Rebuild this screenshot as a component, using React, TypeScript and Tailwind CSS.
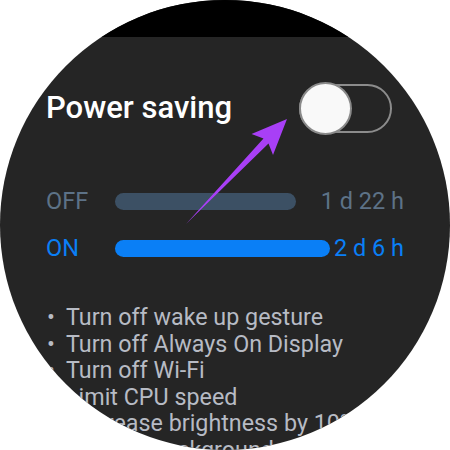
import React from "react";

const stats = [
  { label: "OFF", bar: "w-[181px] bg-[#3c5064]", value: "1 d 22 h", color: "text-[#5d7287]" },
  { label: "ON", bar: "w-[215px] bg-[#0a7ff6]", value: "2 d 6 h", color: "text-[#0a7ff6]" },
];

const tips = [
  "Turn off wake up gesture",
  "Turn off Always On Display",
  "Turn off Wi-Fi",
  "Limit CPU speed",
  "Decrease brightness by 10%",
  "Restrict background network usage",
];

export default function App() {
  return (
    <div className="w-[450px] h-[450px] bg-white font-['Roboto',sans-serif]">
      <div className="relative w-[450px] h-[450px] rounded-full overflow-hidden bg-[#252525]">
        {/* status strip */}
        <div className="h-[37px] bg-black" />

        {/* header */}
        <div className="mt-[47px] flex items-center justify-between pl-[46px] pr-[58px]">
          <span className="text-[31px] font-medium text-white leading-none -mt-[2px]">Power saving</span>
          <div className="relative w-[93px] h-[49px] rounded-full border-2 border-[#8c8c8c]">
            <div className="absolute -left-[2px] -top-[4px] w-[53px] h-[53px] rounded-full bg-[#f9f9f9] border-2 border-[#8a8a8a]" />
          </div>
        </div>

        {/* usage bars */}
        <div className="mt-[60px] flex flex-col gap-[30px] pl-[46px] pr-[46px]">
          {stats.map((s) => (
            <div key={s.label} className={`flex items-center h-[17px] ${s.color}`}>
              <span className="w-[69px] text-[23.5px] leading-none">{s.label}</span>
              <div className={`h-[17px] rounded-full ${s.bar}`} />
              <span className="flex-1 text-right text-[23.5px] leading-none">{s.value}</span>
            </div>
          ))}
        </div>

        {/* tips */}
        <ul className="mt-[47px] pl-[46px] text-[23.3px] leading-[26.5px] text-[#b7bbc4] whitespace-nowrap">
          {tips.map((t) => (
            <li key={t} className="flex">
              <span className="w-[20px] pl-[1px]">•</span>
              <span>{t}</span>
            </li>
          ))}
        </ul>

        {/* annotation arrow */}
        <svg className="absolute left-0 top-0" width="450" height="450" viewBox="0 0 450 450">
          <polygon
            points="287,119 251.5,134 263.5,138.6 186,224 268.5,143.4 273,155"
            fill="#a83ff6"
          />
        </svg>
      </div>
    </div>
  );
}
